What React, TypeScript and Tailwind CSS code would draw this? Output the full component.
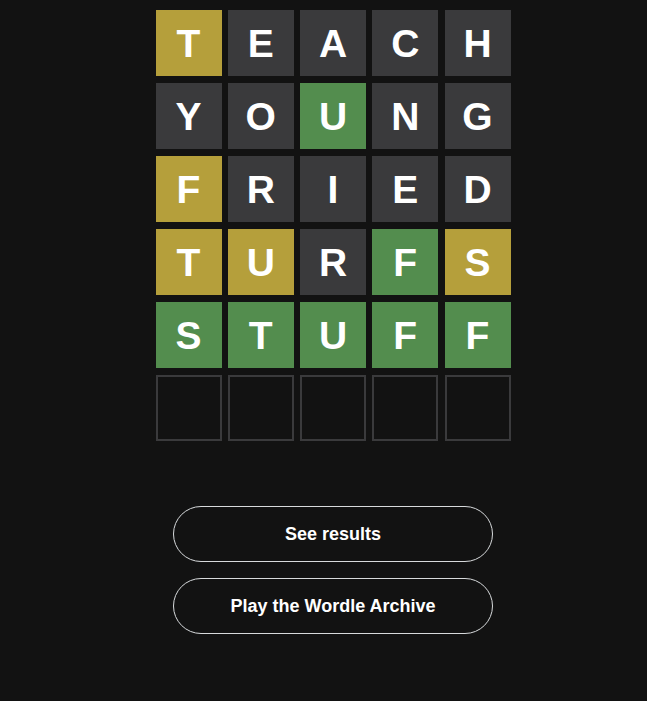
const rows: { letter: string; state: "correct" | "present" | "absent" | "empty" }[][] = [
  [
    { letter: "T", state: "present" },
    { letter: "E", state: "absent" },
    { letter: "A", state: "absent" },
    { letter: "C", state: "absent" },
    { letter: "H", state: "absent" },
  ],
  [
    { letter: "Y", state: "absent" },
    { letter: "O", state: "absent" },
    { letter: "U", state: "correct" },
    { letter: "N", state: "absent" },
    { letter: "G", state: "absent" },
  ],
  [
    { letter: "F", state: "present" },
    { letter: "R", state: "absent" },
    { letter: "I", state: "absent" },
    { letter: "E", state: "absent" },
    { letter: "D", state: "absent" },
  ],
  [
    { letter: "T", state: "present" },
    { letter: "U", state: "present" },
    { letter: "R", state: "absent" },
    { letter: "F", state: "correct" },
    { letter: "S", state: "present" },
  ],
  [
    { letter: "S", state: "correct" },
    { letter: "T", state: "correct" },
    { letter: "U", state: "correct" },
    { letter: "F", state: "correct" },
    { letter: "F", state: "correct" },
  ],
  [
    { letter: "", state: "empty" },
    { letter: "", state: "empty" },
    { letter: "", state: "empty" },
    { letter: "", state: "empty" },
    { letter: "", state: "empty" },
  ],
];

const tileStyles = {
  correct: "bg-[#538d4e]",
  present: "bg-[#b59f3b]",
  absent: "bg-[#3a3a3c]",
  empty: "border-2 border-[#3a3a3c]",
};

export default function App() {
  return (
    <div
      className="min-h-[701px] w-full bg-[#121212] pl-[19px] pt-[10px] text-white"
      style={{ fontFamily: '"Liberation Sans", Arial, sans-serif' }}
    >
      <div className="flex flex-col items-center">
        {/* Board */}
        <div className="flex flex-col gap-[7px]">
          {rows.map((row, r) => (
            <div key={r} className="flex gap-[6.25px]">
              {row.map((tile, c) => (
                <div
                  key={c}
                  className={`flex h-[66px] w-[66px] items-center justify-center text-[39px] font-bold leading-none ${tileStyles[tile.state]}`}
                >
                  {tile.letter}
                </div>
              ))}
            </div>
          ))}
        </div>

        {/* Actions */}
        <div className="mt-[65px] flex flex-col gap-[16px]">
          <button className="h-[56px] w-[320px] rounded-full border border-[#d7dadc] text-[18px] font-bold text-white">
            See results
          </button>
          <button className="h-[56px] w-[320px] rounded-full border border-[#d7dadc] text-[18px] font-bold text-white">
            Play the Wordle Archive
          </button>
        </div>
      </div>
    </div>
  );
}
